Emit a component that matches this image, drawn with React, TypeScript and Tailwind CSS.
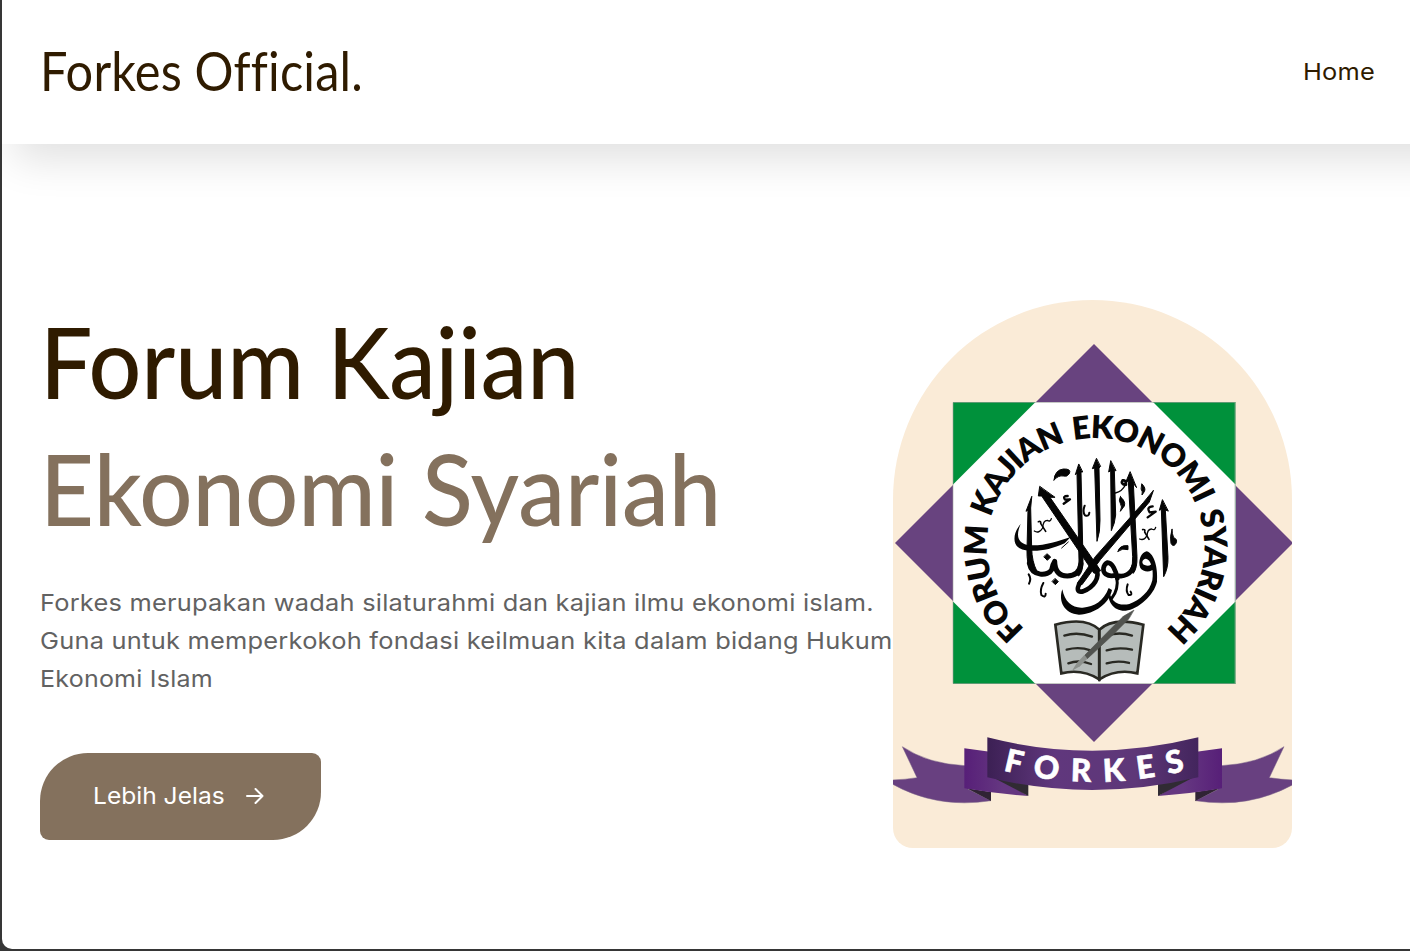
function Calligraphy() {
  return (
    <g transform="translate(1000 440) scale(.33333)" fill="#050505" stroke="#050505" strokeLinecap="round" strokeLinejoin="round">
      <g strokeWidth="3">
        <path d="M95 170 L78 214 L84 210 L81 330 Q80 372 92 392 L110 392 Q96 365 95 325 L92 205 Z" />
        <path d="M119 140 L115 168 L125 168 L282 400 L302 392 L150 172 L164 172 Z" />
        <path d="M236 73 L226 104 L231 100 L237 360 Q238 385 225 400 L236 408 Q250 395 249 360 L243 96 L247 96 Z" />
        <path d="M289 56 L277 86 L284 84 L291 304 Q301 275 300 240 L297 84 L301 80 Z" />
        <path d="M332 63 L326 96 L332 92 L334 272 Q345 250 347 225 L343 92 L347 92 Z" />
        <path d="M390 96 L377 127 L385 124 L398 350 Q400 375 390 392 L400 400 Q412 385 411 350 L400 130 L409 142 Z" />
        <path d="M487 180 L478 211 L484 208 L491 410 Q505 385 504 352 L496 210 L504 213 Z" />
        <path d="M460 152 L448 186 L302 358 L246 434 L232 430 L286 350 L430 188 Z" />
        <path d="M162 120 Q164 90 190 87 Q215 86 208 101 Q200 112 190 108 Q176 105 162 120 Z" />
        <path d="M142 342 L152 351 L142 361 L132 351 Z M166 416 L175 425 L166 434 L157 425 Z" />
        <path d="M354 334 Q358 315 384 317 L384 329 Q368 323 354 334 Z" />
        <path d="M516 268 Q509 292 513 310 Q519 322 527 312 Q535 298 521 293 Q516 282 516 268 Z" />
        <path d="M361 170 Q378 184 373 198 L361 214 Q368 200 361 190 Q355 182 361 170 Z" />
        <path d="M426 132 Q439 145 433 155 L426 165 Q429 155 424 148 Z" />
      </g>
      <g stroke="none">
        <path d="M62 252 C50 280 48 307 82 315 C122 320 170 306 212 291 L194 310 C152 329 114 336 77 331 C34 325 36 282 62 252 Z" />
        <path d="M187 448 C194 487 218 505 248 503 C284 500 310 484 326 444 L336 450 C328 490 285 522 237 524 C193 522 174 483 187 448 Z" />
        <path d="M327 446 C330 484 354 499 388 492 C420 480 449 455 457 421 C462 388 452 358 438 356 C426 357 423 371 434 375 C447 381 455 374 460 365 L464 381 C455 400 430 397 421 384 C412 364 424 336 440 334 C465 341 474 389 471 425 C462 466 414 508 377 512 C342 514 318 484 327 446 Z" />
      </g>
      <g fill="none">
        <path d="M88 370 C96 411 145 409 155 389 Q158 373 164 364 Q165 408 202 408 Q237 408 243 371" strokeWidth="15" />
        <path d="M240 428 C228 450 233 457 249 454 C281 442 302 413 288 383" strokeWidth="14" />
        <path d="M352 415 C348 393 337 367 322 368 C309 375 306 394 317 402 Q330 411 348 405 C370 414 396 402 402 375" strokeWidth="14" />
        <path d="M350 410 Q357 447 335 475" strokeWidth="9" />
        <path d="M205 306 L185 324" strokeWidth="3" />
        <path d="M203 168 Q187 168 195 179 L210 178 L191 191 M458 199 Q438 201 449 217 L467 215 L443 232" strokeWidth="7" />
        <path d="M254 197 Q247 216 255 226 Q267 231 268 218" strokeWidth="6" />
        <path d="M346 159 Q367 155 377 133" strokeWidth="4" />
        <path d="M378 134 Q378 119 368 121 Q361 131 375 135" strokeWidth="8" />
        <path d="M154 236 Q151 247 142 241 Q129 241 128 264 Q117 282 103 273 M467 262 Q464 273 455 267 Q442 267 441 287 Q432 303 419 297" strokeWidth="4" />
        <path d="M115 245 Q124 242 122 250 L137 274 M428 269 Q437 267 434 276 L447 298" strokeWidth="5" />
        <path d="M86 403 Q95 416 87 431 M130 429 Q119 449 124 465 Q137 476 137 461 M383 433 Q376 453 386 465 Q399 466 392 455" strokeWidth="6" />
      </g>
    </g>
  )
}

function Book() {
  return (
    <g transform="translate(1040 600) scale(.33333)" strokeLinecap="round">
      <path d="M46 74 Q137 49 178 89 Q220 50 310 74 L292 220 Q230 205 178 238 Q125 205 64 220 Z" fill="#b6bcba" stroke="#292923" strokeWidth="8" strokeLinejoin="miter" />
      <path d="M178 89 V240" stroke="#292923" strokeWidth="9" />
      <path d="M73 107 Q112 94 156 110 M80 149 Q117 139 152 151 M85 190 Q117 178 153 192 M202 107 Q238 94 276 107 M200 151 Q237 140 276 149 M200 190 Q234 180 267 189" fill="none" stroke="#292923" strokeWidth="7" />
      <path d="M281 31 L250 49 L208 91 L134 166 L142 176 L216 107 L266 57 Z" fill="#51534f" stroke="#51534f" strokeWidth="2" />
      <path d="M133 165 L111 188 L96 212 L120 199 L142 176 Z" fill="#8d918d" />
    </g>
  )
}

function RibbonSide() {
  return (
    <>
      <path d="M52 530 Q130 582 240 587 L250 658 L318 692 Q155 718 18 640 L18 630 Q60 629 96 623 Z" fill="#684080" stroke="#7b668a" strokeWidth="1.5" />
      <path d="M245 655 L318 666 L318 693 Z" fill="#302334" />
      <path d="M238 535 L320 546 L350 630 L430 678 Q330 671 238 655 Z" fill="url(#side)" />
      <path d="M320 620 L430 642 L430 678 Z" fill="#302b33" />
    </>
  )
}

function Emblem() {
  return (
    <svg className="block h-[548px] w-[399px]" viewBox="893 300 399 548" role="img" aria-label="Forkes">
      <defs>
        <linearGradient id="band">
          <stop offset="0" stopColor="#3c2054" />
          <stop offset=".32" stopColor="#60377d" />
          <stop offset=".7" stopColor="#5e3778" />
          <stop offset="1" stopColor="#43255d" />
        </linearGradient>
        <linearGradient id="side">
          <stop offset="0" stopColor="#571f78" />
          <stop offset=".6" stopColor="#653781" />
        </linearGradient>
        <path id="ring" d="M1024.500 628.500 A108.500 108.500 0 1 1 1160 634" />
        <path id="motto" d="M1003 770.5 Q1095 794 1192 769" />
      </defs>
      <path d="M1094 344 L1293 543 L1094 742 L895 543 Z" fill="#68437f" />
      <path d="M953 402 H1235.500 V684 H953 Z" fill="#00913b" />
      <path d="M1035.500 402 H1153 L1235.500 484.500 V601.500 L1153 684 H1035.500 L953 601.500 V484.500 Z" fill="#fff" />
      <path d="M953 402.500 H1235 V683.500 H953 Z" fill="none" stroke="#9da39c" strokeWidth=".6" />
      <text fontFamily="Lato" fontWeight="800" fontSize="31.500" wordSpacing="3" fill="#070707">
        <textPath href="#ring" textLength="528" lengthAdjust="spacing">FORUM KAJIAN EKONOMI SYARIAH</textPath>
      </text>
      <Calligraphy />
      <Book />
      <g transform="translate(885 570) scale(.33333)">
        <RibbonSide />
        <g transform="translate(1249 0) scale(-1 1)">
          <RibbonSide />
        </g>
        <path d="M307 502 Q620 582 940 502 L940 622 Q620 698 307 622 Z" fill="url(#band)" />
      </g>
      <text fontFamily="Lato" fontWeight="900" fontSize="31.500" fill="#fff" stroke="#fff" strokeWidth=".6">
        <textPath href="#motto" textLength="184" lengthAdjust="spacing">FORKES</textPath>
      </text>
    </svg>
  )
}

export default function App() {
  return (
    <div className="h-[951px] w-[1410px] overflow-hidden bg-[#363636] pb-[2px] pl-[2px] font-['Inter',sans-serif]">
      <div className="h-[949px] overflow-hidden rounded-bl-[10px] bg-white">
        <header className="flex h-36 w-[1500px] items-center bg-white pl-[38px] shadow-[0_28px_42px_-12px_rgba(0,0,0,0.12)]">
          <div className="w-[1263px] pb-[2px]">
            <a className="block origin-left scale-x-[0.91] whitespace-nowrap font-['Lato',sans-serif] text-[53.500px] leading-none tracking-[0.2px] text-[#2f1b00]">Forkes Official.</a>
          </div>
          <nav className="origin-left scale-x-[1.08] text-[23.500px] tracking-[0.2px] text-[#2f1b00]">Home</nav>
        </header>
        <main className="flex pl-[38px] pt-[156px]">
          <section className="w-[853px] whitespace-nowrap">
            <h1 className="-mt-[3px] font-['Lato',sans-serif] text-[99px] font-medium leading-[127px] text-[#2f1b00]">
              <span className="block origin-left scale-x-[0.938]">Forum Kajian</span>
              <span className="block origin-left scale-x-[0.946] text-[#84715d]">Ekonomi Syariah</span>
            </h1>
            <p className="mt-[33px] text-[23.500px] leading-[38px] tracking-[0.22px] text-[#626262]">
              <span className="block origin-left scale-x-[1.08]">Forkes merupakan wadah silaturahmi dan kajian ilmu ekonomi islam.</span>
              <span className="block origin-left scale-x-[1.081]">Guna untuk memperkokoh fondasi keilmuan kita dalam bidang Hukum</span>
              <span className="block origin-left scale-x-[1.064]">Ekonomi Islam</span>
            </p>
            <button className="mt-[55px] flex h-[87px] w-[281px] items-center rounded-[48px_9px_48px_9px] bg-[#84715d] pb-[2px] pl-[53px] text-[23.500px] text-white">
              <span className="w-[153px] origin-left scale-x-[1.045] text-left">Lebih Jelas</span>
              <svg className="h-4 w-[18px]" viewBox="0 0 18 16" fill="none" stroke="white" strokeWidth="2" strokeLinecap="round" strokeLinejoin="round">
                <path d="M1 8 H16.500 M9.500 1 L16.500 8 L9.500 15" />
              </svg>
            </button>
          </section>
          <figure className="h-[548px] w-[399px] overflow-hidden rounded-[200px_200px_20px_20px] bg-[#faebd7]">
            <Emblem />
          </figure>
        </main>
      </div>
    </div>
  )
}
